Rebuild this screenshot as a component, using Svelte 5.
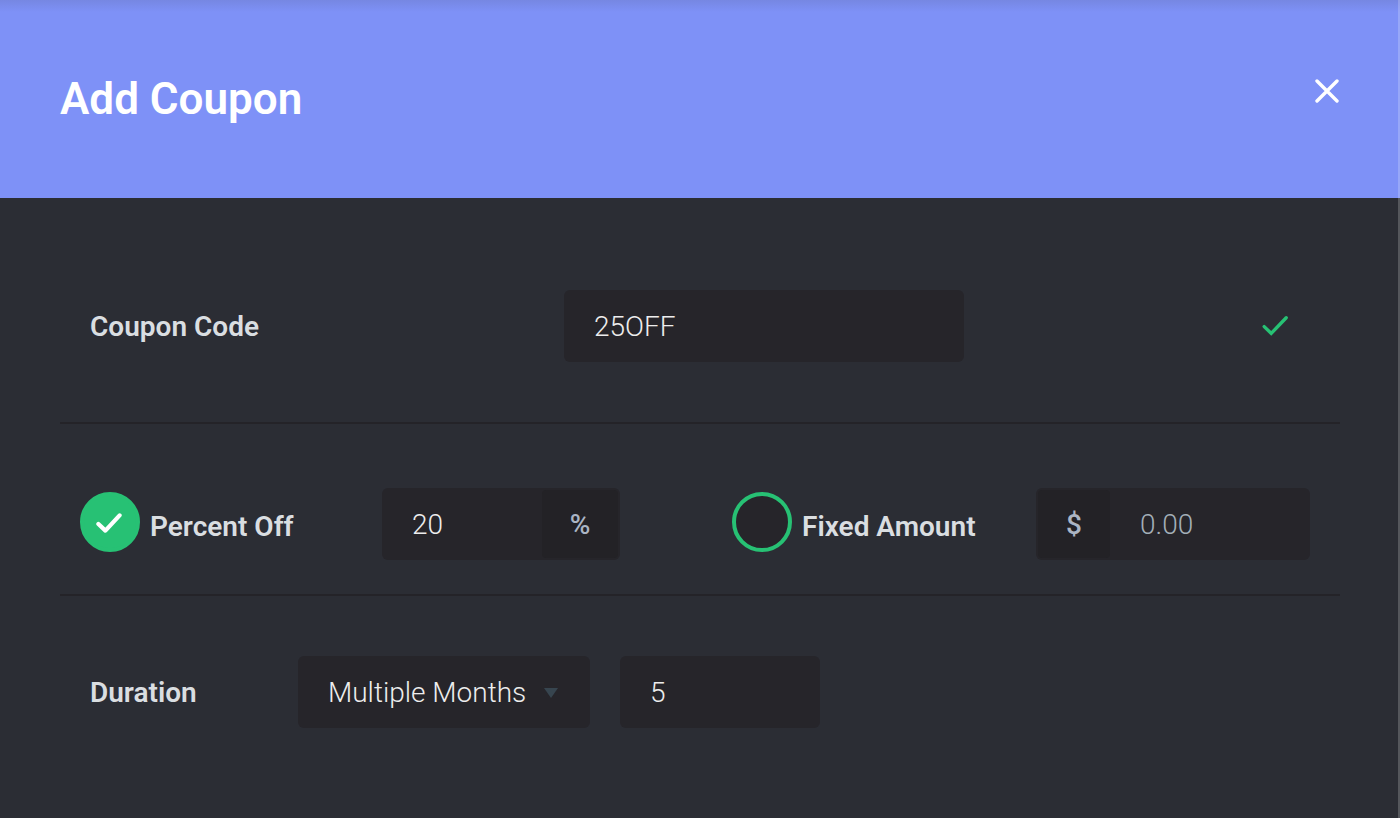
<script>
  let code = $state('25OFF');
  let kind = $state('percent');
  let percent = $state('20');
  let amount = $state('');
  let duration = $state('multiple');
  let months = $state('5');
</script>

<section class="dialog" aria-labelledby="title">
  <header>
    <h1 id="title">Add Coupon</h1>
    <button class="close" type="button" aria-label="Close">
      <svg width="24" height="24" viewBox="0 0 24 24" aria-hidden="true">
        <path d="M2 2L22 22M22 2L2 22" fill="none" stroke="#fff" stroke-width="3.4" stroke-linecap="round" />
      </svg>
    </button>
  </header>

  <form>
    <div class="row code">
      <label for="code">Coupon Code</label>
      <input class="field" id="code" type="text" bind:value={code} />
      <svg class="valid" width="26" height="20" viewBox="0 0 26 20" aria-hidden="true">
        <path d="M2.2 10.6L9.2 17.4L24.2 1.8" fill="none" stroke="#27c174" stroke-width="3.4" stroke-linecap="round" stroke-linejoin="miter" />
      </svg>
    </div>

    <div class="row kinds">
      <div class="choice">
        <span class="mark">
          <input id="kind-percent" type="radio" name="kind" value="percent" bind:group={kind} />
          {#if kind === 'percent'}
            <svg width="26" height="20" viewBox="0 0 26 20" aria-hidden="true">
              <path d="M2.4 11L9.4 17.6L23.6 2.4" fill="none" stroke="#fff" stroke-width="4.2" stroke-linecap="round" stroke-linejoin="round" />
            </svg>
          {/if}
        </span>
        <label for="kind-percent">Percent Off</label>
      </div>
      <div class="field group">
        <input type="text" aria-label="Percent" bind:value={percent} />
        <span class="unit">%</span>
      </div>
      <div class="choice">
        <span class="mark">
          <input id="kind-fixed" type="radio" name="kind" value="fixed" bind:group={kind} />
          {#if kind === 'fixed'}
            <svg width="26" height="20" viewBox="0 0 26 20" aria-hidden="true">
              <path d="M2.4 11L9.4 17.6L23.6 2.4" fill="none" stroke="#fff" stroke-width="4.2" stroke-linecap="round" stroke-linejoin="round" />
            </svg>
          {/if}
        </span>
        <label for="kind-fixed">Fixed Amount</label>
      </div>
      <div class="field group">
        <span class="unit">$</span>
        <input type="text" aria-label="Amount" placeholder="0.00" bind:value={amount} />
      </div>
    </div>

    <div class="row duration">
      <label for="duration">Duration</label>
      <span class="picker">
        <select class="field" id="duration" bind:value={duration}>
          <option value="once">Once</option>
          <option value="multiple">Multiple Months</option>
          <option value="forever">Forever</option>
        </select>
        <svg width="14" height="10" viewBox="0 0 14 10" aria-hidden="true">
          <path d="M0 0H14L7 10Z" fill="#37454f" />
        </svg>
      </span>
      <input class="field" type="text" aria-label="Months" bind:value={months} />
    </div>
  </form>
</section>

<style>
  :global(body) {
    margin: 0;
    background: #2b2d34;
  }

  .dialog {
    position: relative;
    min-height: 100vh;
    background: #2b2d34;
    color: #dadee1;
    font: 600 28px/36px Roboto, sans-serif;
  }

  .dialog::after {
    content: '';
    position: absolute;
    inset: 0 0 0 auto;
    width: 2px;
    background: rgba(255, 255, 255, 0.2);
  }

  header {
    display: flex;
    align-items: flex-start;
    justify-content: space-between;
    padding: 72px 60px;
    background: linear-gradient(#7687e2, #7e91f7 12px);
  }

  h1 {
    margin: 0;
    color: #fff;
    font-size: 44px;
    line-height: 54px;
    font-weight: 600;
  }

  .close {
    display: flex;
    margin: 7px 1px 0 0;
    padding: 0;
    border: 0;
    background: none;
    cursor: pointer;
  }

  form {
    padding: 32px 60px;
  }

  .row {
    display: grid;
    align-items: center;
    box-sizing: border-box;
  }

  .row + .row {
    border-top: 2px solid #242328;
  }

  label {
    padding-top: 2px;
  }

  .code {
    grid-template-columns: 474fr 400fr 346fr;
    padding: 60px 30px;
  }

  .kinds {
    grid-template-columns: 302fr 238fr 416fr 274fr;
    padding: 64px 30px 34px 20px;
  }

  .duration {
    grid-template-columns: 208fr 292fr 30fr 200fr 490fr;
    padding: 60px 30px;
  }

  .duration > .field {
    grid-column: 4;
  }

  .valid {
    justify-self: end;
    margin-right: 22px;
  }

  input,
  select {
    min-width: 0;
    width: 100%;
    box-sizing: border-box;
    margin: 0;
    border: 0;
    padding: 0 30px;
    background: none;
    color: #ededed;
    font: 300 28px/36px Roboto, sans-serif;
    outline: 0;
  }

  input::placeholder {
    color: #a3afb8;
    opacity: 1;
  }

  .field {
    height: 72px;
    box-sizing: border-box;
    border-radius: 6px;
    background: #26252a;
  }

  .group {
    display: flex;
    padding: 2px;
  }

  .group input {
    flex: 1;
    padding: 2px 28px 0;
  }

  .unit + input {
    padding-left: 30px;
  }

  .unit {
    display: grid;
    flex: none;
    box-sizing: border-box;
    width: 76px;
    padding-top: 2px;
    place-items: center;
    border-radius: 4px;
    background: #232226;
    color: #abb5c4;
    font-weight: 500;
  }

  .unit:first-child {
    width: 72px;
  }

  .choice {
    display: flex;
    align-items: center;
    gap: 10px;
    white-space: nowrap;
  }

  .choice:nth-child(3) {
    padding-left: 112px;
  }

  .choice label {
    padding-top: 6px;
  }

  .mark {
    display: grid;
    flex: none;
    width: 60px;
    height: 60px;
    margin-bottom: 4px;
    place-items: center;
  }

  .mark > * {
    grid-area: 1 / 1;
  }

  .mark svg {
    pointer-events: none;
    margin: 2px 2px 0 0;
  }

  input[type='radio'] {
    appearance: none;
    height: 60px;
    padding: 0;
    border: 4px solid #27c174;
    border-radius: 50%;
    background: #26252a;
  }

  input[type='radio']:checked {
    background: #27c174;
  }

  .picker {
    display: grid;
    align-items: center;
  }

  .picker > * {
    grid-area: 1 / 1;
  }

  .picker svg {
    justify-self: end;
    margin: 2px 32px 0 0;
    pointer-events: none;
  }

  select {
    appearance: none;
    padding-top: 2px;
    text-overflow: ellipsis;
  }
</style>
